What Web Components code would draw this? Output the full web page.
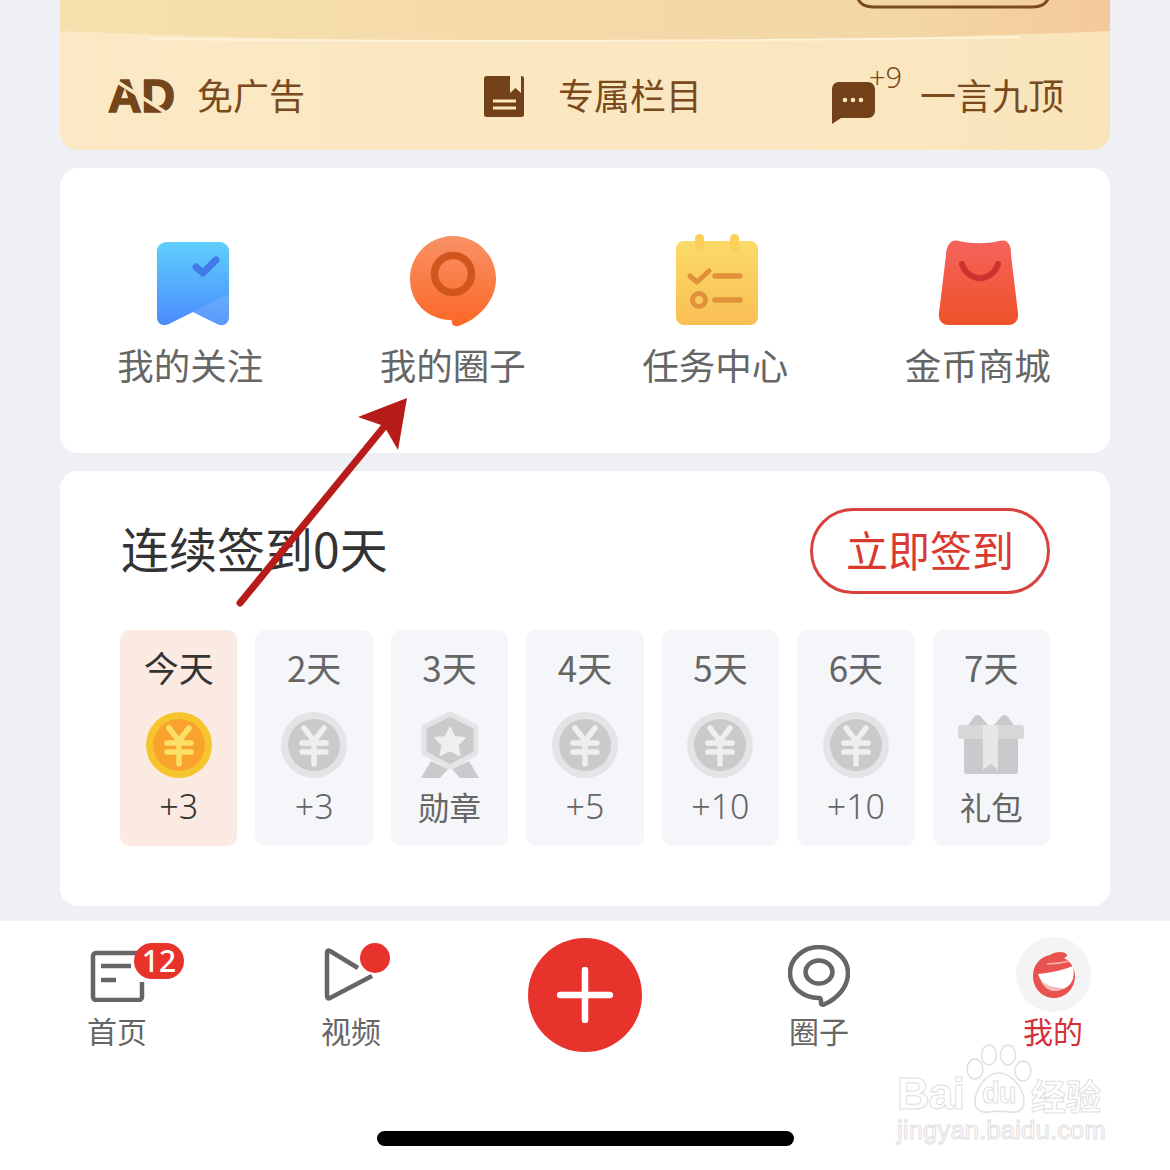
<!DOCTYPE html>
<html lang="zh"><head><meta charset="utf-8"><title>我的</title>
<style>
html,body{margin:0;padding:0;background:#eef0f6}
body{width:1170px;height:1170px;overflow:hidden;position:relative;font-family:"Noto Sans CJK SC","Noto Sans",sans-serif}
</style></head>
<body>
<vip-card>
  <vip-perk label="免广告" icon="ad"></vip-perk>
  <vip-perk label="专属栏目" icon="book"></vip-perk>
  <vip-perk label="一言九顶" icon="chat"></vip-perk>
</vip-card>
<menu-card>
  <menu-item label="我的关注" icon="follow"></menu-item>
  <menu-item label="我的圈子" icon="circle"></menu-item>
  <menu-item label="任务中心" icon="task"></menu-item>
  <menu-item label="金币商城" icon="shop"></menu-item>
</menu-card>
<sign-card>
  <day-cell day="今天" reward="+3" icon="gold" active></day-cell>
  <day-cell day="2天" reward="+3" icon="coin"></day-cell>
  <day-cell day="3天" reward="勋章" icon="medal"></day-cell>
  <day-cell day="4天" reward="+5" icon="coin"></day-cell>
  <day-cell day="5天" reward="+10" icon="coin"></day-cell>
  <day-cell day="6天" reward="+10" icon="coin"></day-cell>
  <day-cell day="7天" reward="礼包" icon="gift"></day-cell>
</sign-card>
<tab-bar>
  <tab-item label="首页" icon="home"></tab-item>
  <tab-item label="视频" icon="video"></tab-item>
  <plus-button></plus-button>
  <tab-item label="圈子" icon="ring"></tab-item>
  <tab-item label="我的" icon="me" active></tab-item>
</tab-bar>
<note-arrow></note-arrow>
<baidu-mark></baidu-mark>
<script>
const YEN='M23 16l10 13 10-13M21 31H45M21 40H45M33 29v23';
const ICONS={
ad:`<svg width="68" height="54" viewBox="0 0 68 54"><text x="0" y="43" font-family="Liberation Sans" font-weight="700" font-size="47" fill="#74441a" stroke="#74441a" stroke-width="1.500" textLength="67" lengthAdjust="spacingAndGlyphs">AD</text><path d="M8 12L60 45" stroke="#fae7c0" stroke-width="3.500"/></svg>`,
book:`<svg width="40" height="41" viewBox="0 0 40 41"><rect width="40" height="41" rx="2.500" fill="#74421a"/><path d="M26 0h11v17l-5.500-5-5.500 5z" fill="#fae7c0"/><path d="M9 25h23M9 32h23" stroke="#fae7c0" stroke-width="3" fill="none"/></svg>`,
chat:`<svg width="44" height="46" viewBox="0 0 44 46"><path d="M7 0h30a7 7 0 0 1 7 7v22a7 7 0 0 1-7 7H10L1 42V7a7 7 0 0 1 6-7z" fill="#74421a"/><circle cx="14" cy="18" r="2.300" fill="#fae7c0"/><circle cx="22" cy="18" r="2.300" fill="#fae7c0"/><circle cx="30" cy="18" r="2.300" fill="#fae7c0"/></svg>`,
follow:`<svg width="72" height="84" viewBox="0 0 72 84"><defs><linearGradient id="f" x1="0" y1="0" x2="0" y2="1"><stop offset="0" stop-color="#5fcffb"/><stop offset="1" stop-color="#4a8bfb"/></linearGradient></defs><path d="M9 0h54a9 9 0 0 1 9 9v66c0 7-6 10-12 7L36 70 12 82c-6 3-12 0-12-7V9a9 9 0 0 1 9-9z" fill="url(#f)"/><path d="M72 52 36 70l24 12c6 3 12 0 12-7z" fill="#fff" opacity=".1"/><path d="M39 25l7 6 13-13" fill="none" stroke="#3f7ae8" stroke-width="7" stroke-linecap="round" stroke-linejoin="round"/></svg>`,
circle:`<svg width="88" height="92" viewBox="0 0 88 92"><defs><linearGradient id="c" x1="0" y1="0" x2="0" y2="1"><stop offset="0" stop-color="#f99266"/><stop offset="1" stop-color="#fb6726"/></linearGradient></defs><path d="M44 1C20 1 1 20 1 44s18 40 40 41c2 0 2 1 2 3s3 4 6 3c17-5 38-23 38-47C87 20 68 1 44 1z" fill="url(#c)"/><circle cx="44" cy="39" r="18.500" fill="none" stroke="#d0561e" stroke-width="7.500"/></svg>`,
task:`<svg width="82" height="92" viewBox="0 0 82 92"><defs><linearGradient id="t" x1="0" y1="0" x2="0" y2="1"><stop offset="0" stop-color="#fbda68"/><stop offset="1" stop-color="#f9bf55"/></linearGradient></defs><rect x="0" y="7" width="82" height="84" rx="8" fill="url(#t)"/><rect x="19" y="0" width="9" height="18" rx="4.500" fill="#fbcf5a"/><rect x="54" y="0" width="9" height="18" rx="4.500" fill="#fbcf5a"/><path d="M14 42l7 6 12-11" fill="none" stroke="#e0913a" stroke-width="5" stroke-linecap="round" stroke-linejoin="round"/><path d="M39 42h25M39 66h25" stroke="#e0913a" stroke-width="5.500" stroke-linecap="round"/><circle cx="23" cy="66" r="6.500" fill="none" stroke="#e0913a" stroke-width="5"/></svg>`,
shop:`<svg width="82" height="86" viewBox="0 0 82 86"><defs><linearGradient id="s" x1="0" y1="0" x2="0" y2="1"><stop offset="0" stop-color="#f5635c"/><stop offset="1" stop-color="#ee5228"/></linearGradient></defs><path d="M12 3c2-3 6-3 9-2 13 3 27 3 40 0 3-1 8-1 9 2 3 3 3 8 3 12l7 58c1 7-3 12-9 12H10c-6 0-10-5-9-12l7-58c0-4 1-9 4-12z" fill="url(#s)"/><path d="M24 24c6 19 30 19 36 0" fill="none" stroke="#cf3330" stroke-width="6" stroke-linecap="round"/></svg>`,
gold:`<svg width="66" height="66" viewBox="0 0 66 66"><circle cx="33" cy="33" r="33" fill="#f6c52d"/><circle cx="33" cy="33" r="26" fill="#f9a32e"/><path d="${YEN}" fill="none" stroke="#fbe066" stroke-width="5.500" stroke-linecap="round"/></svg>`,
coin:`<svg width="66" height="66" viewBox="0 0 66 66"><circle cx="33" cy="33" r="33" fill="#e3e4e6"/><circle cx="33" cy="33" r="26" fill="#c9cacc"/><path d="${YEN}" fill="none" stroke="#eeeff1" stroke-width="5.500" stroke-linecap="round"/></svg>`,
medal:`<svg width="62" height="68" viewBox="0 0 62 68"><path d="M12 50L2 67h19l8-9zM50 50l10 17H41l-8-9z" fill="#c9cacc"/><path d="M31 3l26 13v26L31 56 5 42V16z" fill="#c9cacc" stroke="#e3e4e6" stroke-width="5" stroke-linejoin="round"/><path d="M31 17l4.500 9 10 1-7 7 2 10-9.500-5-9.500 5 2-10-7-7 10-1z" fill="#eeeff1" stroke="#eeeff1" stroke-width="2" stroke-linejoin="round"/></svg>`,
gift:`<svg width="66" height="62" viewBox="0 0 66 62"><path d="M33 14L22 2c-2-2-5-1-6 1L8 14zM33 14L44 2c2-2 5-1 6 1l8 11z" fill="#c9cacc"/><rect x="6" y="22" width="54" height="38" rx="3" fill="#c9cacc"/><rect x="0" y="11" width="66" height="14" rx="3" fill="#d6d7d8"/><path d="M25 11h15v45l-7.500-6-7.500 6z" fill="#e6e7e8"/></svg>`,
home:`<svg width="56" height="52" viewBox="0 0 56 52"><path d="M51 3H6a3 3 0 0 0-3 3v41a3 3 0 0 0 3 3h43a3 3 0 0 0 3-3V32" fill="none" stroke="#666" stroke-width="4.500"/><path d="M11 16h30M11 30h15" fill="none" stroke="#666" stroke-width="4.500"/></svg>`,
video:`<svg width="52" height="54" viewBox="0 0 52 54"><path d="M34 21L6 4c-2-1-3 0-3 2v43c0 2 1 3 3 2l42-22" fill="none" stroke="#666" stroke-width="4.500" stroke-linecap="butt" stroke-linejoin="round"/></svg>`,
ring:`<svg width="62" height="64" viewBox="0 0 62 64"><path d="M31 2C15 2 2 14 2 28s13 25 29 25h0c2 0 2 1 2 3v2c0 2 2 2 4 1 11-5 23-16 23-31C60 14 47 2 31 2z" fill="none" stroke="#666" stroke-width="4.500" stroke-linejoin="round"/><ellipse cx="31" cy="27" rx="13.500" ry="11.500" fill="none" stroke="#666" stroke-width="4.500"/></svg>`,
me:`<svg width="46" height="48" viewBox="0 0 46 48"><path d="M19 4c4-3 11-4 15-2 2 1 3 3 1 4l-2 1c7 4 11 10 11 18 0 12-9 22-21 22S2 37 2 25C2 14 9 6 19 4z" fill="#e9534f"/><path d="M7 23c11-1 22-3 35-8 2 9 0 17-6 21-9 6-24 3-29-13z" fill="#fff"/><path d="M10 30c7 5 15 7 23 7-8 6-19 3-23-7z" fill="#f6bdb9"/><path d="M16 13c8 0 15-1 22-3" stroke="#f7b4b0" stroke-width="1.500" fill="none"/></svg>`
};
function el(name,css,html){
  customElements.define(name,class extends HTMLElement{
    connectedCallback(){
      if(this.shadowRoot)return;
      const a=k=>this.getAttribute(k)||'';
      const r=this.attachShadow({mode:'open'});
      r.innerHTML=`<style>${css}</style>`+html(a,this);
    }
  });
}
el('vip-card',`:host{display:block;position:relative;width:1050px;height:150px;margin:0 60px;border-radius:0 0 18px 18px;overflow:hidden;background:linear-gradient(90deg,#fbe9c5,#fae7c0 80%,#f9e4ba)}
 svg{display:block}
 .row{display:grid;grid-template-columns:356px 340px 1fr;height:107px}`,
()=>`<svg width="1050" height="43" viewBox="0 0 1050 43"><defs><linearGradient id="b" x1="0" y1="0" x2="1" y2="0"><stop offset="0" stop-color="#f7dfae"/><stop offset=".8" stop-color="#f3d7a6"/><stop offset="1" stop-color="#f4c99a"/></linearGradient></defs><path d="M0 0H1050V31Q525 53 0 31Z" fill="url(#b)"/><path d="M90 39Q525 44 960 37" stroke="#fdf3d9" stroke-width="2" fill="none"/><path d="M796-6c3 10 8 13 18 13h158c10 0 15-3 18-13" fill="none" stroke="#7a4b1c" stroke-width="3"/></svg><div class="row"><slot></slot></div>`);
el('vip-perk',`:host{display:flex;align-items:flex-start;color:#7a4a1c;font-size:36px;line-height:38px;padding-top:32px;box-sizing:border-box}
 :host([icon=ad]){padding-left:48px;gap:21px}
 :host([icon=ad]) svg{margin-top:-6px}
 :host([icon=book]){padding-left:68px;gap:34px}
 :host([icon=book]) svg{margin-top:1px}
 :host([icon=chat]){padding-left:75px;gap:45px;position:relative;white-space:nowrap}
 :host([icon=chat]) svg{margin-top:7px}
 .s{position:absolute;left:113px;top:19px;font:300 29px/30px "Noto Sans",sans-serif}`,
a=>`${ICONS[a('icon')]}<span>${a('label')}</span>${a('icon')==='chat'?'<span class="s">+9</span>':''}`);
el('menu-card',`:host{display:grid;grid-template-columns:repeat(4,1fr);width:1050px;height:285px;margin:18px 60px 0;background:#fff;border-radius:18px;box-sizing:border-box;padding-top:67px}`,()=>`<slot></slot>`);
el('menu-item',`:host{display:flex;flex-direction:column;align-items:center;color:#666;font-size:36.500px;line-height:44px;margin-left:-2px}
 .i{height:92px;display:flex;align-items:flex-end;justify-content:center;margin-bottom:16px}
 :host([icon=follow]) .i svg{margin:0 0 1px 5px}
 :host([icon=circle]) .i svg{margin-left:1px}
 :host([icon=task]) .i svg{margin:0 0 1px 3px}
 :host([icon=shop]) .i svg{margin:0 0 1px 2px}`,
a=>`<div class="i">${ICONS[a('icon')]}</div><span>${a('label')}</span>`);
el('sign-card',`:host{display:block;width:1050px;height:435px;margin:18px 60px 0;background:#fff;border-radius:18px;box-sizing:border-box;padding:37px 60px 0}
 .h{display:flex;justify-content:space-between;align-items:center;height:86px;padding-left:1px}
 .t{font-size:48px;line-height:78px;height:86px;color:#333}
 .b{box-sizing:border-box;width:240px;height:86px;border:3px solid #d9423c;border-radius:43px;color:#d9392f;font-size:42px;display:flex;align-items:center;justify-content:center;line-height:1;padding-bottom:4px}
 .d{display:grid;grid-template-columns:repeat(7,1fr);gap:18px;margin-top:36px}`,
()=>`<div class="h"><span class="t">连续签到0天</span><span class="b">立即签到</span></div><div class="d"><slot></slot></div>`);
el('day-cell',`:host{display:flex;flex-direction:column;align-items:center;height:216px;border-radius:10px;background:#f5f6f9;color:#666;box-sizing:border-box;padding-top:15px}
 :host([active]){background:#fbeae2;color:#333}
 .a{font-size:35px;line-height:44px}
 .i{height:72px;margin-top:20px;display:flex;align-items:center;justify-content:center}
 .r{font-size:31.500px;line-height:44px;margin-top:3px}
 .n{font:300 34px/44px "Noto Sans",sans-serif}
 :host([icon=medal]) .i svg{margin-top:-1px}`,
a=>{const r=a('reward');return `<span class="a">${a('day')}</span><div class="i">${ICONS[a('icon')]}</div><span class="r ${r[0]==='+'?'n':''}">${r}</span>`;});
el('tab-bar',`:host{display:grid;grid-template-columns:repeat(5,234px);position:absolute;left:0;right:0;top:921px;bottom:0;background:#fff}
 .h{position:absolute;left:377px;top:210px;width:417px;height:15px;border-radius:8px;background:#000}`,
()=>`<slot></slot><div class="h"></div>`);
el('tab-item',`:host{display:flex;flex-direction:column;align-items:center;position:relative;color:#666;font-size:30px;line-height:40px;padding-top:24px;box-sizing:border-box}
 :host([active]){color:#d5303a}
 .i{height:65px;display:flex;align-items:flex-start;justify-content:center}
 .n{position:absolute;left:134px;top:22px;width:50px;height:36px;border-radius:18px;background:#e8322c;color:#fff;font:500 30px/36px "Noto Sans",sans-serif;text-align:center}
 .o{position:absolute;left:126px;top:22px;width:30px;height:30px;border-radius:50%;background:#e8322c}
 .g{position:absolute;left:80px;top:16px;width:75px;height:75px;border-radius:50%;background:#f4f4f5;display:flex;align-items:center;justify-content:center}
 :host([icon=home]) .i svg{margin:5px 0 0 2px}
 :host([icon=video]) .i svg{margin:2px 0 0 0;transform:translateX(-1px)}`,
(a)=>{const k=a('icon');
 if(k==='me')return `<div class="g">${ICONS.me}</div><div class="i"></div><span>${a('label')}</span>`;
 return `<div class="i">${ICONS[k]}</div><span>${a('label')}</span>`+(k==='home'?'<span class="n">12</span>':'')+(k==='video'?'<span class="o"></span>':'');});
el('plus-button',`:host{display:flex;justify-content:center;padding-top:17px;align-items:flex-start}
 .c{width:114px;height:114px;border-radius:50%;background:#e8322c;display:flex;align-items:center;justify-content:center}`,
()=>`<div class="c"><svg width="56" height="56" viewBox="0 0 56 56"><path d="M28 3v50M3 28h50" stroke="#fff" stroke-width="6.500" stroke-linecap="round"/></svg></div>`);
el('note-arrow',`:host{position:absolute;left:230px;top:390px;width:190px;height:225px;display:block;pointer-events:none}`,
()=>`<svg width="190" height="225" viewBox="0 0 190 225"><path d="M10 213L158 32" stroke="#b71c18" stroke-width="7" stroke-linecap="round"/><path d="M177 8L128 27 154 36 168 60z" fill="#b71c18"/></svg>`);
el('baidu-mark',`:host{position:absolute;left:890px;top:1040px;width:225px;height:110px;display:block;color:#fff}
 .x{position:absolute;white-space:nowrap;-webkit-text-stroke:1px #e0e0e0;font-family:"Liberation Sans",sans-serif}
 .bai{left:7px;top:29px;font-size:45px;line-height:50px;font-weight:700;letter-spacing:-1px}
 .du{left:92px;top:38px;font-size:29px;line-height:30px;font-weight:700;letter-spacing:-1px}
 .jy{left:141px;top:35px;font:700 35px/40px "Noto Sans CJK SC",sans-serif;-webkit-text-stroke:1px #e0e0e0}
 .url{left:7px;top:74px;font-size:25.500px;line-height:32px;letter-spacing:.2px}
 svg{position:absolute;left:75px;top:4px}`,
()=>`<svg width="70" height="70" viewBox="0 0 70 70" fill="#fff" stroke="#e0e0e0" stroke-width="1.500"><ellipse cx="10" cy="25" rx="8" ry="10"/><ellipse cx="24" cy="11" rx="7.500" ry="10"/><ellipse cx="43" cy="11" rx="7.500" ry="10"/><ellipse cx="58" cy="27" rx="8" ry="10"/><path d="M10 58c0-14 12-29 24-29s25 15 25 29c0 9-8 11-14 10-7-1-14-1-21 0-8 1-14-2-14-10z"/></svg><span class="x bai">Bai</span><span class="x du">du</span><span class="x jy">经验</span><span class="x url">jingyan.baidu.com</span>`);
</script>
</body></html>
